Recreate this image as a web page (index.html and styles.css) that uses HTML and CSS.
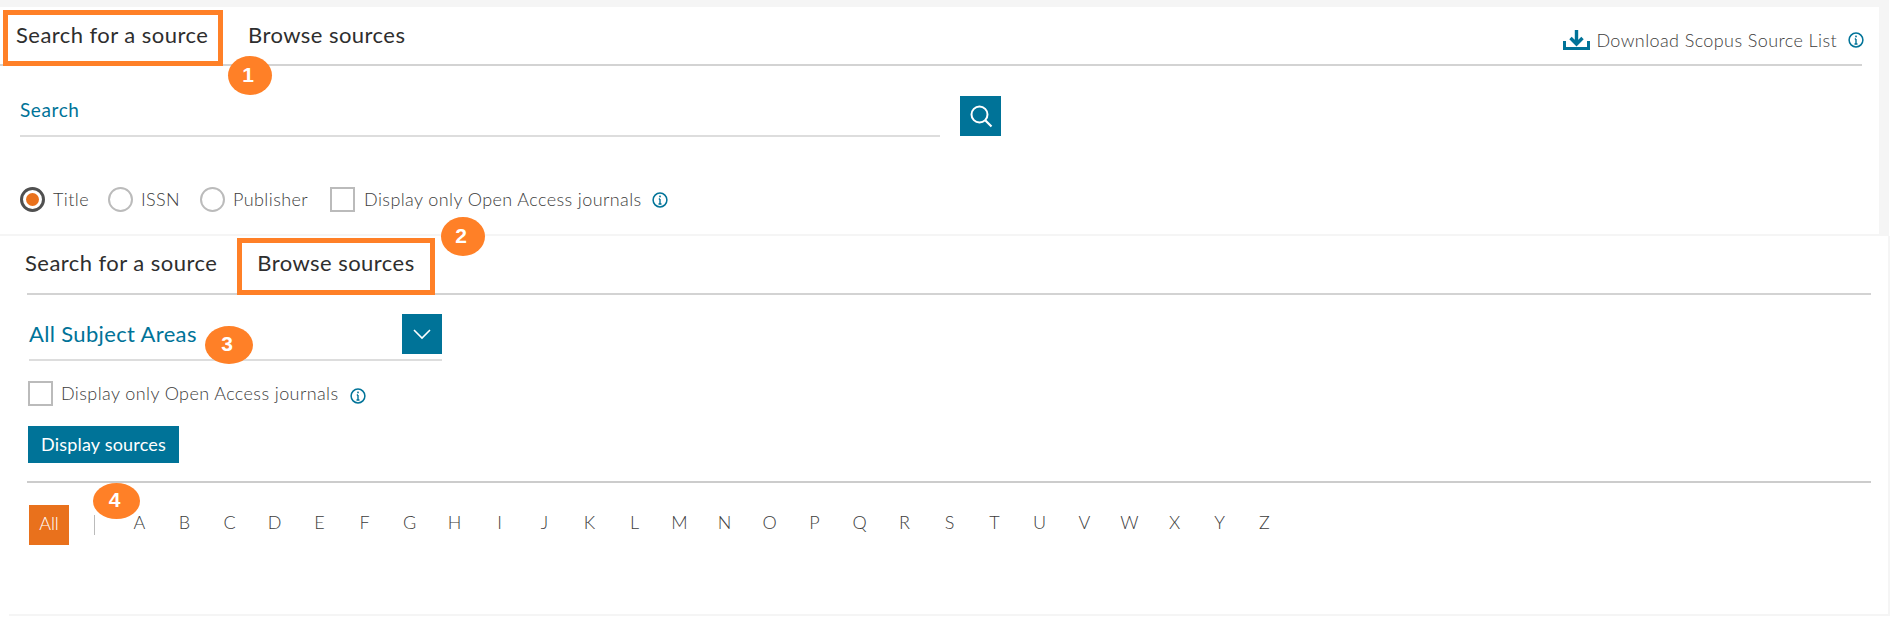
FILE: index.html
```html
<!DOCTYPE html>
<html lang="en">
<head>
    <meta charset="UTF-8">
    <title>Sources</title>
    <link rel="stylesheet" href="styles.css">
</head>
<body>
    <div class="top-panel">
        <div class="tab-bar">
            <div class="tab tab-active tab-search">Search for a source</div>
            <div class="tab tab-browse">Browse sources</div>
            <div class="download">
                <svg class="download-icon" width="27" height="20" viewBox="0 0 27 20">
                    <path d="M1.5 11v7.5h24V11" fill="none" stroke="#007398" stroke-width="3"/>
                    <path d="M13.5 0v12M7.5 8l6 6 6-6" fill="none" stroke="#007398" stroke-width="3.4"/>
                </svg>
                <span class="download-text">Download Scopus Source List</span>
                <svg class="info" width="16" height="16" viewBox="0 0 16 16">
                    <circle cx="8" cy="8" r="6.9" fill="none" stroke="#007398" stroke-width="1.5"/>
                    <path d="M8 7v5M6.5 12h3M6.8 7H8" fill="none" stroke="#007398" stroke-width="1.4"/>
                    <rect x="7.2" y="3.6" width="1.6" height="1.7" fill="#007398"/>
                </svg>
            </div>
        </div>
        <div class="search-row">
            <div class="search-field">Search</div>
            <div class="search-btn">
                <svg width="24" height="24" viewBox="0 0 24 24">
                    <circle cx="10.5" cy="10.5" r="8" fill="none" stroke="#fff" stroke-width="2"/>
                    <path d="M16.2 16.2l6.3 6.3" fill="none" stroke="#fff" stroke-width="2.2"/>
                </svg>
            </div>
        </div>
        <div class="options">
            <span class="radio radio-on"></span>
            <span class="opt-label label-title">Title</span>
            <span class="radio"></span>
            <span class="opt-label label-issn">ISSN</span>
            <span class="radio"></span>
            <span class="opt-label label-publisher">Publisher</span>
            <span class="checkbox"></span>
            <span class="opt-label label-oa">Display only Open Access journals</span>
            <svg class="info info-opt" width="16" height="16" viewBox="0 0 16 16">
                <circle cx="8" cy="8" r="6.9" fill="none" stroke="#007398" stroke-width="1.5"/>
                <path d="M8 7v5M6.5 12h3M6.8 7H8" fill="none" stroke="#007398" stroke-width="1.4"/>
                <rect x="7.2" y="3.6" width="1.6" height="1.7" fill="#007398"/>
            </svg>
        </div>
    </div>

    <div class="bottom-panel">
        <div class="tab-bar tab-bar-browse">
            <div class="tab tab-search-plain">Search for a source</div>
            <div class="tab tab-active tab-browse-active">Browse sources</div>
        </div>
        <div class="subject-select">
            <span class="subject-text">All Subject Areas</span>
            <div class="subject-btn">
                <svg width="20" height="12" viewBox="0 0 20 12">
                    <path d="M2 2l8 8 8-8" fill="none" stroke="#fff" stroke-width="1.6"/>
                </svg>
            </div>
        </div>
        <div class="open-access">
            <span class="checkbox"></span>
            <span class="opt-label">Display only Open Access journals</span>
            <svg class="info info-browse" width="16" height="16" viewBox="0 0 16 16">
                <circle cx="8" cy="8" r="6.9" fill="none" stroke="#007398" stroke-width="1.5"/>
                <path d="M8 7v5M6.5 12h3M6.8 7H8" fill="none" stroke="#007398" stroke-width="1.4"/>
                <rect x="7.2" y="3.6" width="1.6" height="1.7" fill="#007398"/>
            </svg>
        </div>
        <div class="display-btn">Display sources</div>
        <div class="alpha-row">
            <div class="alpha-all">All</div>
            <div class="alpha-sep"></div>
            <div class="letters">
                <span>A</span><span>B</span><span>C</span><span>D</span><span>E</span><span>F</span><span>G</span>
                <span>H</span><span>I</span><span>J</span><span>K</span><span>L</span><span>M</span><span>N</span>
                <span>O</span><span>P</span><span>Q</span><span>R</span><span>S</span><span>T</span><span>U</span>
                <span>V</span><span>W</span><span>X</span><span>Y</span><span>Z</span>
            </div>
        </div>
    </div>

    <div class="badge badge-1">1</div>
    <div class="badge badge-2">2</div>
    <div class="badge badge-3">3</div>
    <div class="badge badge-4">4</div>
</body>
</html>
```
FILE: styles.css
```css
* {
    box-sizing: border-box;
}
body {
    margin: 0;
    position: relative;
    height: 622px;
    overflow: hidden;
    background-color: #fff;
    font-family: Lato, "Open Sans", sans-serif;
    color: #3c3c3c;
}
.top-panel {
    width: 1889px;
    height: 236px;
    background-color: #fff;
    border-top: 7px solid #f5f5f5;
    border-right: 10px solid #f5f5f5;
    border-bottom: 2px solid #f5f5f5;
}
.tab-bar {
    display: flex;
    height: 59px;
    padding-top: 3px;
    margin-right: 17px;
    border-bottom: 2px solid #d3d3d3;
}
.tab {
    font-size: 22px;
    letter-spacing: 0.45px;
    line-height: 50px;
    color: #2e2e2e;
    white-space: nowrap;
}
.tab-active {
    height: 56px;
    border: 5px solid #ff8027;
}
.tab-search {
    width: 220px;
    margin-left: 3px;
    padding-left: 8px;
    line-height: 40px;
}
.tab-browse {
    margin-left: 25px;
}
.download {
    display: flex;
    align-items: center;
    margin-left: auto;
    margin-right: -2px;
    height: 43px;
    padding-top: 17px;
}
.download-text {
    margin-left: 6px;
    font-size: 18px;
    font-weight: 300;
    letter-spacing: 0.4px;
}
.info {
    flex: none;
}
.download .info {
    margin-left: 11px;
}
.search-row {
    display: flex;
    align-items: flex-start;
    margin-top: 30px;
    padding-left: 20px;
}
.search-field {
    width: 920px;
    height: 41px;
    border-bottom: 2px solid #ddd;
    font-size: 19px;
    letter-spacing: 0.6px;
    line-height: 27px;
    color: #007398;
}
.search-btn {
    display: flex;
    align-items: center;
    justify-content: center;
    width: 41px;
    height: 40px;
    margin-left: 20px;
    background-color: #007398;
}
.options {
    display: flex;
    align-items: center;
    margin-top: 50px;
    padding-left: 20px;
}
.radio {
    display: flex;
    align-items: center;
    justify-content: center;
    flex: none;
    width: 25px;
    height: 25px;
    border: 2px solid #bbb;
    border-radius: 50%;
}
.radio-on {
    border: 3px solid #505050;
}
.radio-on::after {
    content: "";
    width: 13px;
    height: 13px;
    border-radius: 50%;
    background-color: #e9711c;
}
.checkbox {
    flex: none;
    width: 25px;
    height: 25px;
    border: 2px solid #bbb;
}
.opt-label {
    margin-left: 8px;
    margin-top: -2px;
    font-size: 18px;
    font-weight: 300;
    letter-spacing: 0.4px;
    white-space: nowrap;
}
.label-title {
    margin-right: 19px;
}
.label-issn {
    margin-right: 20px;
}
.label-publisher {
    margin-right: 22px;
}
.label-oa {
    margin-left: 9px;
}
.info-opt {
    margin-left: 10px;
}
.bottom-panel {
    width: 1881px;
    height: 380px;
    margin-left: 9px;
    padding-left: 18px;
    padding-right: 17px;
    border-right: 2px solid #f5f5f5;
    border-bottom: 2px solid #f5f5f5;
}
.tab-bar-browse {
    height: 59px;
    padding-top: 2px;
    margin-right: 0;
}
.tab-search-plain {
    margin-left: -2px;
    line-height: 50px;
}
.tab-browse-active {
    width: 198px;
    height: 57px;
    margin-left: 20px;
    padding-left: 15px;
    line-height: 40px;
}
.subject-select {
    display: flex;
    justify-content: space-between;
    width: 413px;
    height: 66px;
    margin-left: 2px;
    padding-top: 19px;
    border-bottom: 2px solid #ddd;
}
.subject-text {
    font-size: 22px;
    letter-spacing: 0.35px;
    line-height: 40px;
    color: #007398;
}
.subject-btn {
    display: flex;
    align-items: center;
    justify-content: center;
    width: 40px;
    height: 40px;
    background-color: #007398;
}
.open-access {
    display: flex;
    align-items: center;
    margin-top: 20px;
    margin-left: 1px;
}
.info-browse {
    margin-left: 11px;
    margin-top: 4px;
}
.display-btn {
    width: 151px;
    height: 37px;
    margin-top: 20px;
    margin-left: 1px;
    background-color: #007398;
    color: #fff;
    font-size: 18px;
    font-weight: 400;
    letter-spacing: 0.2px;
    line-height: 37px;
    text-align: center;
}
.alpha-row {
    display: flex;
    align-items: center;
    margin-top: 18px;
    padding-top: 22px;
    border-top: 2px solid #ccc;
}
.alpha-all {
    width: 40px;
    height: 40px;
    margin-left: 2px;
    background-color: #e9711c;
    color: #fff;
    font-size: 18px;
    font-weight: 300;
    line-height: 36px;
    text-align: center;
}
.alpha-sep {
    width: 1px;
    height: 20px;
    margin-left: 25px;
    margin-top: -1px;
    background-color: #bbb;
}
.letters {
    display: flex;
    margin-left: 22px;
    margin-top: -6px;
}
.letters span {
    width: 45px;
    font-size: 18px;
    font-weight: 300;
    text-align: center;
}
.badge {
    position: absolute;
    display: flex;
    align-items: center;
    justify-content: center;
    padding-right: 4px;
    padding-bottom: 2px;
    border-radius: 50%;
    background-color: #ff8027;
    color: #fff;
    font-family: "Liberation Sans", sans-serif;
    font-size: 21px;
    font-weight: 700;
}
.badge-1 {
    left: 228px;
    top: 56px;
    width: 44px;
    height: 39px;
}
.badge-2 {
    left: 441px;
    top: 217px;
    width: 44px;
    height: 39px;
}
.badge-3 {
    left: 205px;
    top: 326px;
    width: 48px;
    height: 38px;
}
.badge-4 {
    left: 93px;
    top: 483px;
    width: 47px;
    height: 36px;
}
```
